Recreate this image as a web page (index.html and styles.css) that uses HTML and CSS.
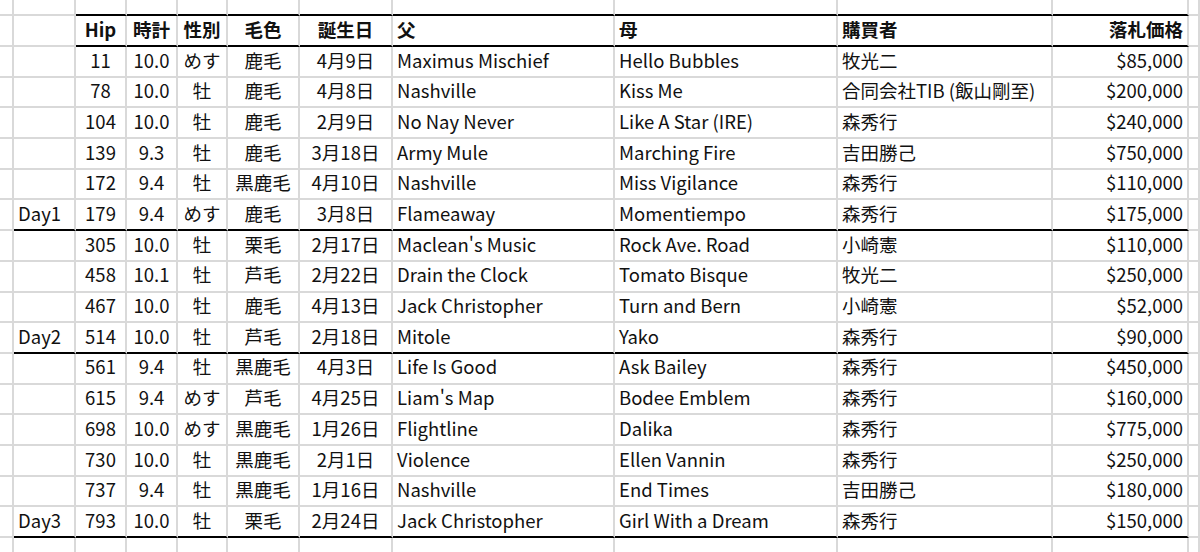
FILE: index.html
```html
<!DOCTYPE html>
<html lang="ja">
<head>
<meta charset="utf-8">
<link rel="stylesheet" href="styles.css">
</head>
<body>
<div class="sheet">
  <div class="row top">
    <div class="c"></div><div class="c"></div>
    <div class="c k"></div><div class="c k"></div><div class="c k"></div><div class="c k"></div><div class="c k"></div><div class="c k"></div><div class="c k"></div><div class="c k"></div><div class="c k"></div>
    <div class="c"></div>
  </div>
  <div class="row hdr">
    <div class="c"></div><div class="c"></div>
    <div class="c k ctr">Hip</div><div class="c k ctr">時計</div><div class="c k ctr">性別</div><div class="c k ctr">毛色</div><div class="c k ctr">誕生日</div><div class="c k">父</div><div class="c k">母</div><div class="c k">購買者</div><div class="c k rt">落札価格</div>
    <div class="c"></div>
  </div>

  <div class="row d"><div class="c"></div><div class="c"></div><div class="c ctr">11</div><div class="c ctr">10.0</div><div class="c ctr">めす</div><div class="c ctr">鹿毛</div><div class="c ctr">4月9日</div><div class="c">Maximus Mischief</div><div class="c">Hello Bubbles</div><div class="c">牧光二</div><div class="c rt">$85,000</div><div class="c"></div></div>
  <div class="row d"><div class="c"></div><div class="c"></div><div class="c ctr">78</div><div class="c ctr">10.0</div><div class="c ctr">牡</div><div class="c ctr">鹿毛</div><div class="c ctr">4月8日</div><div class="c">Nashville</div><div class="c">Kiss Me</div><div class="c">合同会社TIB (飯山剛至)</div><div class="c rt">$200,000</div><div class="c"></div></div>
  <div class="row d"><div class="c"></div><div class="c"></div><div class="c ctr">104</div><div class="c ctr">10.0</div><div class="c ctr">牡</div><div class="c ctr">鹿毛</div><div class="c ctr">2月9日</div><div class="c">No Nay Never</div><div class="c">Like A Star (IRE)</div><div class="c">森秀行</div><div class="c rt">$240,000</div><div class="c"></div></div>
  <div class="row d"><div class="c"></div><div class="c"></div><div class="c ctr">139</div><div class="c ctr">9.3</div><div class="c ctr">牡</div><div class="c ctr">鹿毛</div><div class="c ctr">3月18日</div><div class="c">Army Mule</div><div class="c">Marching Fire</div><div class="c">吉田勝己</div><div class="c rt">$750,000</div><div class="c"></div></div>
  <div class="row d"><div class="c"></div><div class="c"></div><div class="c ctr">172</div><div class="c ctr">9.4</div><div class="c ctr">牡</div><div class="c ctr">黒鹿毛</div><div class="c ctr">4月10日</div><div class="c">Nashville</div><div class="c">Miss Vigilance</div><div class="c">森秀行</div><div class="c rt">$110,000</div><div class="c"></div></div>
  <div class="row d end"><div class="c"></div><div class="c k">Day1</div><div class="c k ctr">179</div><div class="c k ctr">9.4</div><div class="c k ctr">めす</div><div class="c k ctr">鹿毛</div><div class="c k ctr">3月8日</div><div class="c k">Flameaway</div><div class="c k">Momentiempo</div><div class="c k">森秀行</div><div class="c k rt">$175,000</div><div class="c"></div></div>

  <div class="row d"><div class="c"></div><div class="c"></div><div class="c ctr">305</div><div class="c ctr">10.0</div><div class="c ctr">牡</div><div class="c ctr">栗毛</div><div class="c ctr">2月17日</div><div class="c">Maclean's Music</div><div class="c">Rock Ave. Road</div><div class="c">小崎憲</div><div class="c rt">$110,000</div><div class="c"></div></div>
  <div class="row d"><div class="c"></div><div class="c"></div><div class="c ctr">458</div><div class="c ctr">10.1</div><div class="c ctr">牡</div><div class="c ctr">芦毛</div><div class="c ctr">2月22日</div><div class="c">Drain the Clock</div><div class="c">Tomato Bisque</div><div class="c">牧光二</div><div class="c rt">$250,000</div><div class="c"></div></div>
  <div class="row d"><div class="c"></div><div class="c"></div><div class="c ctr">467</div><div class="c ctr">10.0</div><div class="c ctr">牡</div><div class="c ctr">鹿毛</div><div class="c ctr">4月13日</div><div class="c">Jack Christopher</div><div class="c">Turn and Bern</div><div class="c">小崎憲</div><div class="c rt">$52,000</div><div class="c"></div></div>
  <div class="row d end"><div class="c"></div><div class="c k">Day2</div><div class="c k ctr">514</div><div class="c k ctr">10.0</div><div class="c k ctr">牡</div><div class="c k ctr">芦毛</div><div class="c k ctr">2月18日</div><div class="c k">Mitole</div><div class="c k">Yako</div><div class="c k">森秀行</div><div class="c k rt">$90,000</div><div class="c"></div></div>

  <div class="row d"><div class="c"></div><div class="c"></div><div class="c ctr">561</div><div class="c ctr">9.4</div><div class="c ctr">牡</div><div class="c ctr">黒鹿毛</div><div class="c ctr">4月3日</div><div class="c">Life Is Good</div><div class="c">Ask Bailey</div><div class="c">森秀行</div><div class="c rt">$450,000</div><div class="c"></div></div>
  <div class="row d"><div class="c"></div><div class="c"></div><div class="c ctr">615</div><div class="c ctr">9.4</div><div class="c ctr">めす</div><div class="c ctr">芦毛</div><div class="c ctr">4月25日</div><div class="c">Liam's Map</div><div class="c">Bodee Emblem</div><div class="c">森秀行</div><div class="c rt">$160,000</div><div class="c"></div></div>
  <div class="row d"><div class="c"></div><div class="c"></div><div class="c ctr">698</div><div class="c ctr">10.0</div><div class="c ctr">めす</div><div class="c ctr">黒鹿毛</div><div class="c ctr">1月26日</div><div class="c">Flightline</div><div class="c">Dalika</div><div class="c">森秀行</div><div class="c rt">$775,000</div><div class="c"></div></div>
  <div class="row d"><div class="c"></div><div class="c"></div><div class="c ctr">730</div><div class="c ctr">10.0</div><div class="c ctr">牡</div><div class="c ctr">黒鹿毛</div><div class="c ctr">2月1日</div><div class="c">Violence</div><div class="c">Ellen Vannin</div><div class="c">森秀行</div><div class="c rt">$250,000</div><div class="c"></div></div>
  <div class="row d"><div class="c"></div><div class="c"></div><div class="c ctr">737</div><div class="c ctr">9.4</div><div class="c ctr">牡</div><div class="c ctr">黒鹿毛</div><div class="c ctr">1月16日</div><div class="c">Nashville</div><div class="c">End Times</div><div class="c">吉田勝己</div><div class="c rt">$180,000</div><div class="c"></div></div>
  <div class="row d end"><div class="c"></div><div class="c k">Day3</div><div class="c k ctr">793</div><div class="c k ctr">10.0</div><div class="c k ctr">牡</div><div class="c k ctr">栗毛</div><div class="c k ctr">2月24日</div><div class="c k">Jack Christopher</div><div class="c k">Girl With a Dream</div><div class="c k">森秀行</div><div class="c k rt">$150,000</div><div class="c"></div></div>

  <div class="row bottom">
    <div class="c"></div><div class="c"></div><div class="c"></div><div class="c"></div><div class="c"></div><div class="c"></div><div class="c"></div><div class="c"></div><div class="c"></div><div class="c"></div><div class="c"></div><div class="c"></div>
  </div>
</div>
</body>
</html>
```
FILE: styles.css
```css
html, body {
  margin: 0;
  padding: 0;
  background: #ffffff;
}
body {
  width: 1200px;
  height: 552px;
  overflow: hidden;
  font-family: "Noto Sans CJK JP", "Noto Sans", sans-serif;
  font-size: 18.5px;
  color: #111111;
}
.sheet {
  display: flex;
  flex-direction: column;
}
.row {
  display: grid;
  grid-template-columns: 14px 62px 51px 51px 50px 72px 93px 222px 223px 215px 136px 11px;
}
.row.top { height: 16px; }
.row.hdr { height: 31px; font-weight: 700; }
.row.d { height: 30.6875px; }
.row.bottom { height: 20px; }
.c {
  box-sizing: border-box;
  min-width: 0;
  border-right: 2px solid #d9d9d9;
  border-bottom: 2px solid #d9d9d9;
  padding: 0 4px 3px 4px;
  display: flex;
  align-items: center;
  white-space: nowrap;
  line-height: 1;
}
.c.k { border-bottom-color: #000000; }
.c.ctr { justify-content: center; padding-left: 1px; padding-right: 1px; }
.c.rt { justify-content: flex-end; }
.row.top .c { padding: 0; }
```
